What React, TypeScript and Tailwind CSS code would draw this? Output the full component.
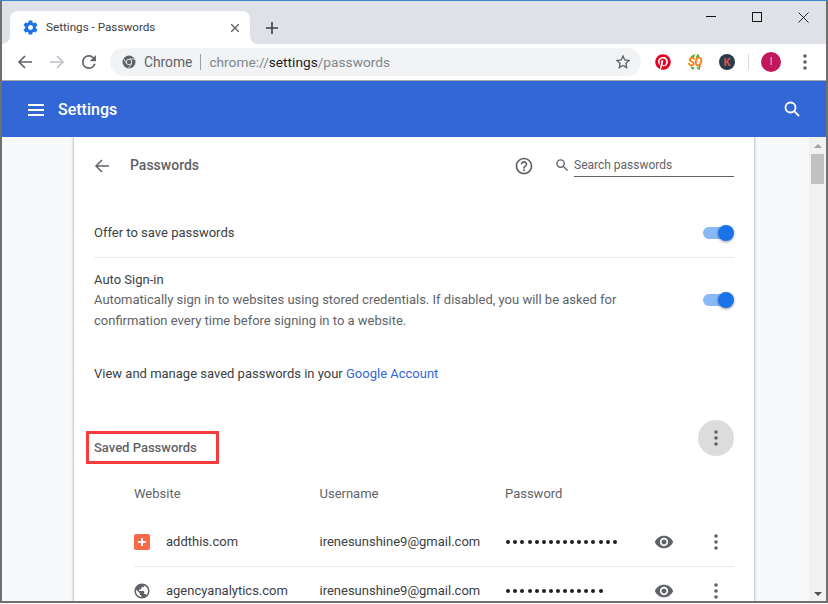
import React from "react";
import { FaPinterest } from "react-icons/fa";

const F = "font-['Roboto','Liberation_Sans',sans-serif]";

function Dots({ c = "#5f6368" }: { c?: string }) {
  return (
    <svg width="4" height="16" viewBox="0 0 4 16" fill={c}>
      <circle cx="2" cy="2" r="1.8" />
      <circle cx="2" cy="8" r="1.8" />
      <circle cx="2" cy="14" r="1.8" />
    </svg>
  );
}

function Toggle() {
  return (
    <div className="relative w-[31px] h-[16px] shrink-0">
      <div className="absolute left-0 top-[2px] w-[28px] h-[12px] rounded-full bg-[#8ab8f6]" />
      <div className="absolute right-0 top-0 w-[16px] h-[16px] rounded-full bg-[#1a73e8] shadow-[0_1px_3px_rgba(0,0,0,0.4)]" />
    </div>
  );
}

function Eye() {
  return (
    <svg width="20" height="20" viewBox="0 0 24 24" fill="#5f6368">
      <path d="M12 4.500C7 4.500 2.730 7.610 1 12c1.730 4.390 6 7.500 11 7.500s9.270-3.110 11-7.500c-1.730-4.390-6-7.500-11-7.500zM12 17c-2.760 0-5-2.240-5-5s2.240-5 5-5 5 2.240 5 5-2.240 5-5 5zm0-8c-1.660 0-3 1.340-3 3s1.340 3 3 3 3-1.340 3-3-1.340-3-3-3z" />
    </svg>
  );
}

function Row({ icon, site, pw, last }: { icon: React.ReactNode; site: string; pw: number; last?: boolean }) {
  return (
    <div className={`flex items-center ${last ? "h-[48px]" : "h-[50px] border-b border-[#e8eaed]"} shrink-0 text-[13px] text-[#3c4043]`}>
      <div className="w-[32px] shrink-0">{icon}</div>
      <div className="w-[153.500px] shrink-0">{site}</div>
      <div className="w-[185.500px] shrink-0">irenesunshine9@gmail.com</div>
      <div className="w-[149px] shrink-0 flex gap-[3.100px] pl-[1.300px]">
        {Array.from({ length: pw }).map((_, i) => (
          <span key={i} className="w-[4px] h-[4px] rounded-full bg-[#202124] shrink-0" />
        ))}
      </div>
      <div className="w-[60px] shrink-0 flex items-center"><Eye /></div>
      <div className="flex items-center"><Dots /></div>
    </div>
  );
}

export default function App() {
  return (
    <div className={`${F} w-[828px] h-[604px] overflow-hidden bg-white flex flex-col border-t border-[#3d85c6] pb-[1px]`}>
      <div className="flex-1 min-h-0 flex flex-col border-l-2 border-r-2 border-b-2 border-[#6f6f6f]">
        {/* tab strip */}
        <div className="h-[43px] shrink-0 bg-[#dee1e6] flex items-end pl-[8px]">
          <div className="relative w-[240px] h-[33px] bg-white rounded-t-[8px] flex items-center pl-[11.500px] pr-[11px] shrink-0">
            <div className="absolute right-full bottom-0 w-[8px] h-[8px] bg-white">
              <div className="w-full h-full bg-[#dee1e6] rounded-br-[8px]" />
            </div>
            <div className="absolute left-full bottom-0 w-[8px] h-[8px] bg-white">
              <div className="w-full h-full bg-[#dee1e6] rounded-bl-[8px]" />
            </div>
            <svg width="17" height="17" viewBox="0 0 24 24" fill="#1a73e8" className="shrink-0">
              <path d="M19.430 12.980c.04-.32.07-.64.07-.98s-.03-.66-.07-.98l2.110-1.650c.19-.15.24-.42.12-.64l-2-3.460c-.12-.22-.39-.3-.61-.22l-2.490 1c-.52-.4-1.080-.73-1.690-.98l-.38-2.650C14.460 2.180 14.250 2 14 2h-4c-.25 0-.46.18-.49.42l-.38 2.650c-.61.25-1.170.59-1.690.98l-2.490-1c-.23-.09-.49 0-.61.22l-2 3.460c-.13.22-.07.49.12.64l2.110 1.650c-.04.32-.07.65-.07.98s.03.66.07.98l-2.110 1.650c-.19.15-.24.42-.12.64l2 3.460c.12.22.39.3.61.22l2.490-1c.52.4 1.080.73 1.690.98l.38 2.650c.03.24.24.42.49.42h4c.25 0 .46-.18.49-.42l.38-2.650c.61-.25 1.170-.59 1.690-.98l2.490 1c.23.09.49 0 .61-.22l2-3.460c.12-.22.07-.49-.12-.64l-2.110-1.650zM12 15.500c-1.930 0-3.500-1.570-3.500-3.500s1.570-3.500 3.500-3.500 3.500 1.570 3.500 3.500-1.570 3.500-3.500 3.500z" />
            </svg>
            <span className="ml-[7.500px] text-[11.700px] text-[#3c4043] flex-1">Settings - Passwords</span>
            <svg width="8" height="8" viewBox="0 0 8 8" stroke="#5f6368" strokeWidth="1.400"><path d="M0 0L8 8M8 0L0 8" /></svg>
          </div>
          <div className="h-[33px] flex items-center ml-[16px]">
            <svg width="12" height="12" viewBox="0 0 12 12" stroke="#3c4043" strokeWidth="1.600"><path d="M6 0V12M0 6H12" /></svg>
          </div>
          <div className="flex-1 self-start flex justify-end items-center h-[32px]">
            <svg width="10" height="2" viewBox="0 0 10 2" className="mr-[36px]"><rect width="10" height="1" fill="#111" /></svg>
            <svg width="10" height="10" viewBox="0 0 10 10" fill="none" stroke="#111" className="mr-[36px]"><rect x="0.500" y="0.500" width="9" height="9" /></svg>
            <svg width="11" height="11" viewBox="0 0 11 11" stroke="#222" className="mr-[17px]"><path d="M0.500 0.500L10.500 10.500M10.500 0.500L0.500 10.500" /></svg>
          </div>
        </div>

        {/* toolbar */}
        <div className="h-[37px] shrink-0 bg-white border-b border-[#a8a8a8] flex items-center pl-[15px]">
          <svg width="16" height="16" viewBox="0 0 16 16" fill="none" stroke="#5f6368" strokeWidth="1.700" className="shrink-0"><path d="M15 8H2M8 2L2 8L8 14" /></svg>
          <svg width="16" height="16" viewBox="0 0 16 16" fill="none" stroke="#bdc1c6" strokeWidth="1.700" className="ml-[16px] shrink-0"><path d="M1 8H14M8 2L14 8L8 14" /></svg>
          <svg width="16" height="16" viewBox="0 0 24 24" fill="#5f6368" className="ml-[16px] shrink-0"><path d="M19.300 4.700A10.400 10.400 0 0 0 12 1.600C6.200 1.600 1.600 6.200 1.600 12S6.200 22.400 12 22.400c4.800 0 8.900-3.300 10-7.800h-2.700a7.800 7.800 0 1 1-7.300-10.400c2.200 0 4.100.9 5.500 2.300L13.300 10.700h9.100V1.600z" /></svg>
          <div className="ml-[13px] w-[531px] h-[28px] rounded-full bg-[#f1f3f4] flex items-center pl-[12px] pr-[10px] shrink-0">
            <svg width="14" height="14" viewBox="0 0 14 14" className="shrink-0">
              <circle cx="7" cy="7" r="6.500" fill="#5f6368" />
              <circle cx="7" cy="7" r="3" fill="#f1f3f4" />
              <circle cx="7" cy="7" r="2.200" fill="#5f6368" />
              <path d="M7 4H13M4.400 8.500L1.400 3.400M9.600 8.500L6.600 13.400" stroke="#f1f3f4" strokeWidth="0.800" />
            </svg>
            <span className="ml-[8px] text-[13.800px] text-[#5f6368]">Chrome</span>
            <span className="ml-[8px] w-px h-[16px] bg-[#9aa0a6]" />
            <span className="ml-[8px] text-[13.700px] text-[#80868b] flex-1">chrome://<span className="text-[#202124]">settings</span>/passwords</span>
            <svg width="16" height="16" viewBox="0 0 24 24" fill="none" stroke="#5f6368" strokeWidth="2" className="shrink-0"><path d="M12 3l2.700 6 6.300.7-4.700 4.400 1.300 6.400L12 17.200l-5.600 3.300 1.300-6.400L3 9.700l6.300-.7z" /></svg>
          </div>
          <div className="ml-[14px] w-[16px] h-[16px] shrink-0 flex items-center justify-center"><FaPinterest size={16} color="#e60023" /></div>
          <div className="relative ml-[16px] w-[16px] h-[16px] shrink-0 flex items-center justify-center">
            <svg width="16" height="16" viewBox="0 0 16 16" className="absolute inset-0" stroke="#5fa83a" strokeWidth="1.500" fill="none">
              <path d="M4 3L7 1.500L6 3.500M9 3.500L11 1L12 3M4 12.500L6 15L7 13M10 13L12 15L12.500 12.500" />
            </svg>
            <span className="relative text-[#f57c00] text-[12px] font-bold italic leading-none tracking-[-0.5px]">SQ</span>
          </div>
          <div className="ml-[16px] w-[16px] h-[16px] rounded-full bg-[#2b3a4d] flex items-center justify-center text-[#d9534a] text-[11px] font-bold leading-none shrink-0">K</div>
          <div className="ml-[13px] w-px h-[16px] bg-[#dadce0] shrink-0" />
          <div className="ml-[12px] w-[20px] h-[20px] rounded-full bg-[#c2185b] flex items-center justify-center text-[#f5b5cf] text-[10px] leading-none shrink-0">I</div>
          <div className="ml-[22px] flex items-center"><Dots c="#5f6368" /></div>
        </div>

        {/* blue bar */}
        <div className="h-[56px] shrink-0 bg-[#3367d6] flex items-center pl-[26px] pr-[26px]">
          <svg width="16" height="12" viewBox="0 0 16 12" fill="#fff" className="shrink-0 mt-[1px]"><rect width="16" height="2" /><rect y="5" width="16" height="2" /><rect y="10" width="16" height="2" /></svg>
          <span className="ml-[14px] mt-[2px] text-[16px] font-medium text-white flex-1">Settings</span>
          <svg width="16" height="16" viewBox="0 0 16 16" fill="none" stroke="#fff" strokeWidth="1.800"><circle cx="6.500" cy="6.500" r="5" /><path d="M10.200 10.200L15 15" /></svg>
        </div>

        {/* content */}
        <div className="flex-1 min-h-0 flex bg-[#f8f9fa]">
          <div className="flex-1 min-w-0 pl-[72px] overflow-hidden">
            <div className="w-[680px] h-full bg-white shadow-[0_0_2px_1px_rgba(60,64,67,0.3)] pl-[20px] pr-[20px] flex flex-col overflow-hidden">
              <div className="h-[57px] shrink-0 flex items-center">
                <svg width="16" height="16" viewBox="0 0 16 16" fill="none" stroke="#5f6368" strokeWidth="1.500" className="shrink-0"><path d="M15 8H2M8 2L2 8L8 14" /></svg>
                <span className="ml-[20px] text-[14px] font-medium text-[#5f6368] flex-1">Passwords</span>
                <svg width="20" height="20" viewBox="0 0 24 24" fill="#5f6368" className="shrink-0"><path d="M11 18h2v-2h-2v2zm1-16C6.480 2 2 6.480 2 12s4.480 10 10 10 10-4.480 10-10S17.520 2 12 2zm0 18c-4.410 0-8-3.590-8-8s3.590-8 8-8 8 3.590 8 8-3.590 8-8 8zm0-14c-2.210 0-4 1.790-4 4h2c0-1.100.9-2 2-2s2 .9 2 2c0 2-3 1.750-3 5h2c0-2.250 3-2.500 3-5 0-2.210-1.790-4-4-4z" /></svg>
                <svg width="12" height="12" viewBox="0 0 13 13" fill="none" stroke="#5f6368" strokeWidth="1.500" className="ml-[22px] shrink-0 mt-[-1px]"><circle cx="5" cy="5" r="4" /><path d="M8 8L12.500 12.500" /></svg>
                <div className="ml-[6px] w-[160px] h-[23px] border-b border-[#5f6368] flex items-center text-[12px] text-[#5f6368] shrink-0 mt-[-1px]">Search passwords</div>
              </div>
              <div className="h-[64px] shrink-0 flex items-center justify-between border-b border-[#e8eaed] text-[13px] text-[#3c4043] pt-[15px]">
                <span>Offer to save passwords</span>
                <Toggle />
              </div>
              <div className="h-[84px] shrink-0 flex items-center justify-between text-[13px]">
                <div className="w-[540px] leading-[20.500px] pt-[1px]">
                  <div className="text-[#3c4043]">Auto Sign-in</div>
                  <div className="text-[#5f6368]">Automatically sign in to websites using stored credentials. If disabled, you will be asked for confirmation every time before signing in to a website.</div>
                </div>
                <Toggle />
              </div>
              <div className="h-[48px] shrink-0 text-[13px] text-[#3c4043] flex items-center pt-[16px]">
                <span>View and manage saved passwords in your <span className="text-[#3367d6]">Google Account</span></span>
              </div>
              <div className="h-[80px] shrink-0 flex items-start justify-between pt-[30px]">
                <div className="relative mt-[18px] text-[13px] font-medium text-[#5f6368]">
                  Saved Passwords
                  <div className="absolute left-[-8px] top-[-7px] w-[133px] h-[33px] border-[3px] border-[#f63c3c]" />
                </div>
                <div className="w-[36px] h-[36px] rounded-full bg-[#dcdcdc] flex items-center justify-center"><Dots /></div>
              </div>
              <div className="flex items-center h-[35px] pl-[40px] pt-[13px] shrink-0 text-[13px] text-[#5f6368]">
                <div className="w-[185.500px]">Website</div>
                <div className="w-[185.500px]">Username</div>
                <div>Password</div>
              </div>
              <div className="pl-[40px] pt-[12px] flex flex-col">
                <Row
                  site="addthis.com"
                  pw={16}
                  icon={
                    <div className="w-[16px] h-[16px] rounded-[2px] bg-[#f8694a] flex items-center justify-center">
                      <svg width="8" height="8" viewBox="0 0 8 8" fill="#fff"><path d="M3 0h2v3h3v2H5v3H3V5H0V3h3z" /></svg>
                    </div>
                  }
                />
                <Row
                  site="agencyanalytics.com"
                  pw={14}
                  last
                  icon={
                    <svg width="18" height="18" viewBox="0 0 24 24" fill="#5f6368" className="ml-[-1px]"><path d="M12 2C6.480 2 2 6.480 2 12s4.480 10 10 10 10-4.480 10-10S17.520 2 12 2zm-1 17.930c-3.950-.49-7-3.850-7-7.930 0-.62.08-1.210.21-1.790L9 15v1c0 1.100.9 2 2 2v1.930zm6.900-2.540c-.26-.81-1-1.390-1.900-1.390h-1v-3c0-.55-.45-1-1-1H8v-2h2c.55 0 1-.45 1-1V7h2c1.100 0 2-.9 2-2v-.41c2.930 1.190 5 4.060 5 7.410 0 2.080-.8 3.970-2.100 5.390z" /></svg>
                  }
                />
              </div>
            </div>
          </div>
          {/* scrollbar */}
          <div className="w-[17px] shrink-0 bg-[#f1f1f1] flex flex-col items-center justify-between pt-[7px] pb-[5px]">
            <div className="flex flex-col items-center w-full">
              <div className="w-0 h-0 border-x-[4px] border-x-transparent border-b-[4px] border-b-[#a3a3a3]" />
              <div className="w-[13px] h-[30px] bg-[#c1c1c1] mt-[6px]" />
            </div>
            <div className="w-0 h-0 border-x-[4px] border-x-transparent border-t-[4px] border-t-[#505050]" />
          </div>
        </div>
      </div>
    </div>
  );
}
